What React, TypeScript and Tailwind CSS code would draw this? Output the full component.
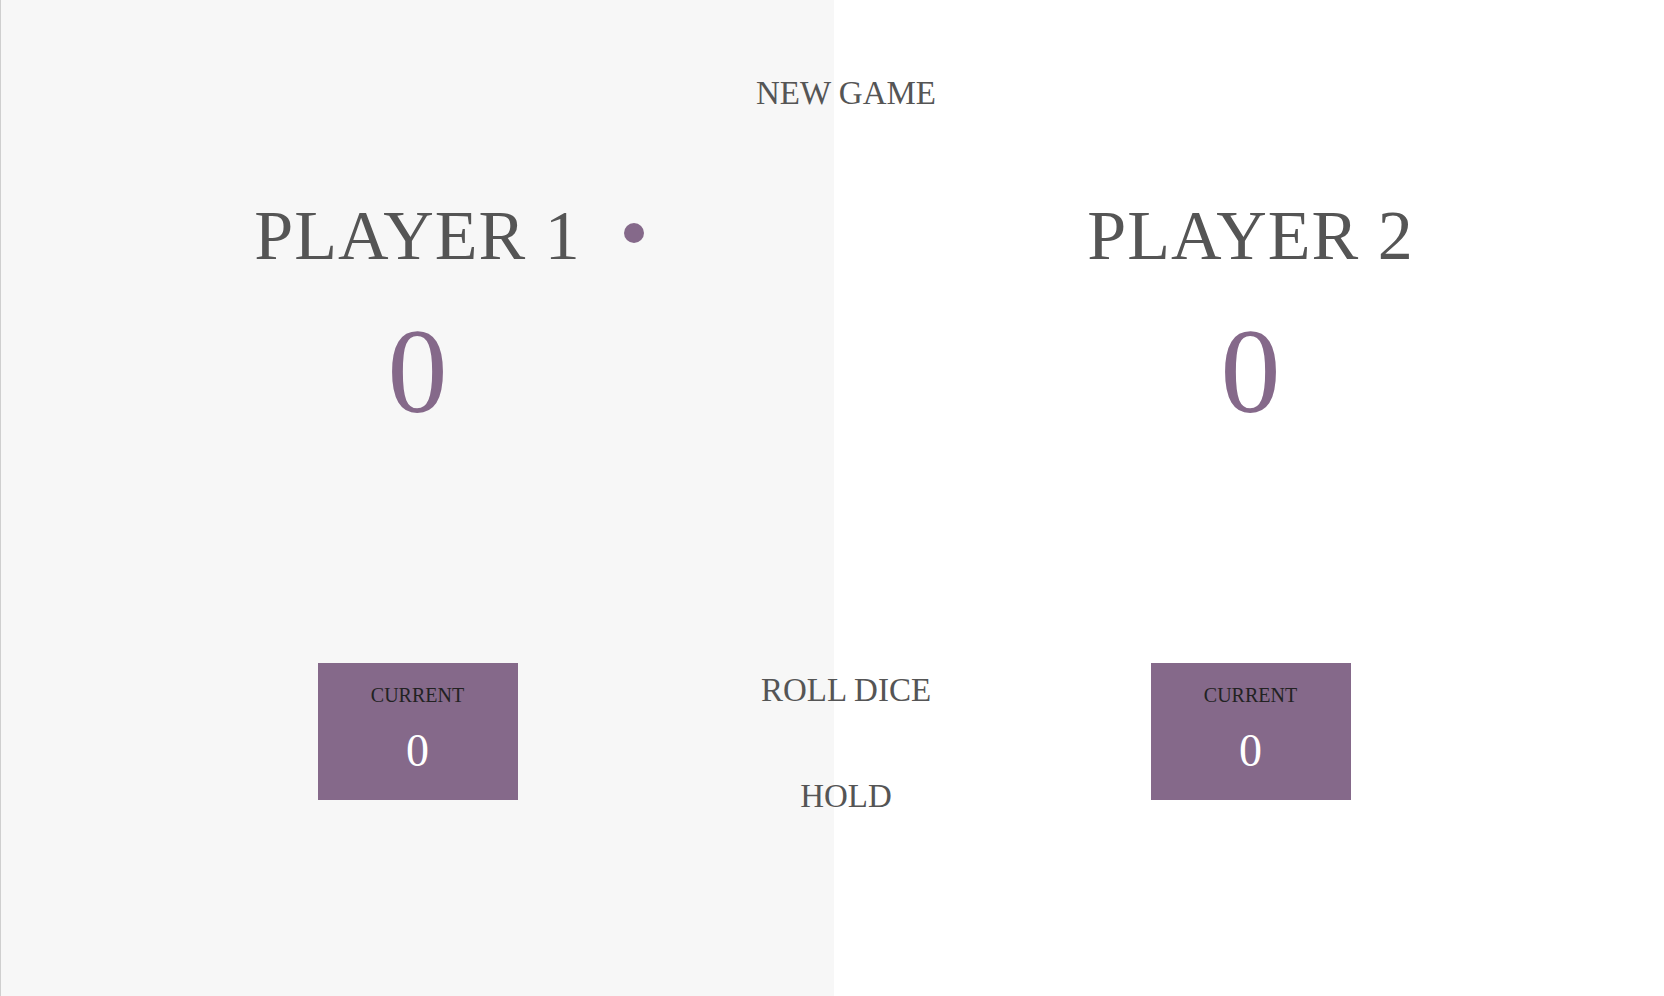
export default function App() {
  const serif = { fontFamily: '"Liberation Serif", "Times New Roman", serif' }

  return (
    <div className="relative flex w-full h-[996px] overflow-hidden border-l border-[#cfcfcf]" style={serif}>

      {/* Player 1 (active) */}
      <div className="w-[833px] shrink-0 h-full bg-[#f7f7f7] flex flex-col items-center">
        <div className="relative w-full mt-[201px] text-center text-[70px] leading-none text-[#555] uppercase tracking-[1px]">
          Player 1
          <span className="absolute top-[22px] left-[calc(50%+206px)] w-5 h-5 rounded-full bg-[#85698a]" />
        </div>
        <div className="mt-[41px] text-[120px] leading-none text-[#85698a]">0</div>
        <div className="mt-[231px] w-[200px] h-[137px] bg-[#85698a] flex flex-col items-center">
          <div className="mt-[22px] text-[20px] leading-none text-[#222] uppercase">Current</div>
          <div className="mt-[23px] text-[46px] leading-none text-white">0</div>
        </div>
      </div>

      {/* Player 2 */}
      <div className="w-[833px] shrink-0 h-full bg-white flex flex-col items-center">
        <div className="relative w-full mt-[201px] text-center text-[70px] leading-none text-[#555] uppercase tracking-[1px]">
          Player 2
        </div>
        <div className="mt-[41px] text-[120px] leading-none text-[#85698a]">0</div>
        <div className="mt-[231px] w-[200px] h-[137px] bg-[#85698a] flex flex-col items-center">
          <div className="mt-[22px] text-[20px] leading-none text-[#222] uppercase">Current</div>
          <div className="mt-[23px] text-[46px] leading-none text-white">0</div>
        </div>
      </div>

      {/* Buttons */}
      <button className="absolute top-[77px] left-[845px] -translate-x-1/2 text-[33px] leading-none text-[#555] uppercase whitespace-nowrap">
        New game
      </button>
      <button className="absolute top-[674px] left-[845px] -translate-x-1/2 text-[33px] leading-none text-[#555] uppercase whitespace-nowrap">
        Roll dice
      </button>
      <button className="absolute top-[780px] left-[845px] -translate-x-1/2 text-[33px] leading-none text-[#555] uppercase whitespace-nowrap">
        Hold
      </button>
    </div>
  )
}
